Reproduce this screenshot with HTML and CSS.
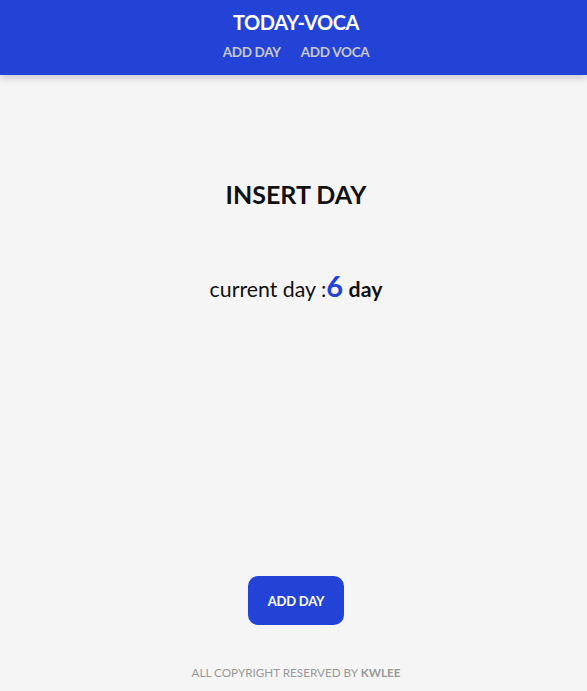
FILE: index.html
```html
<!DOCTYPE html>
<html lang="en">
<head>
<meta charset="utf-8">
<title>TODAY-VOCA</title>
<link rel="stylesheet" href="styles.css">
</head>
<body>
<div class="app">
  <header class="header">
    <h1 class="logo">TODAY-VOCA</h1>
    <nav class="nav">
      <a class="nav-link" href="#">ADD DAY</a>
      <a class="nav-link" href="#">ADD VOCA</a>
    </nav>
  </header>
  <main class="main">
    <h2 class="title">INSERT DAY</h2>
    <p class="current">current day :<span class="num">6</span> <b class="unit">day</b></p>
    <div class="spacer"></div>
    <button class="btn">ADD DAY</button>
  </main>
  <footer class="footer">ALL COPYRIGHT RESERVED BY <b>KWLEE</b></footer>
</div>
</body>
</html>
```
FILE: styles.css
```css
* { box-sizing: border-box; }
html, body { margin: 0; padding: 0; }
body {
  background: #f5f5f5;
  font-family: Lato, "Noto Sans", sans-serif;
  color: #111;
}
.app {
  min-height: 691px;
  display: flex;
  flex-direction: column;
}
.header {
  background: #2343d7;
  height: 75px;
  display: flex;
  flex-direction: column;
  align-items: center;
  padding: 10px 0 0 5px;
  box-shadow: 0 3px 8px rgba(0,0,0,0.18);
}
.logo {
  margin: 0;
  color: #fff;
  font-size: 20px;
  font-weight: 700;
  line-height: 24px;
  letter-spacing: -0.4px;
}
.nav {
  display: flex;
  gap: 20px;
  margin-top: 9px;
}
.nav-link {
  color: #c9c9cc;
  font-size: 13.5px;
  font-weight: 700;
  text-decoration: none;
  line-height: 18px;
  letter-spacing: -0.3px;
}
.main {
  flex: 1;
  display: flex;
  flex-direction: column;
  align-items: center;
  padding: 103px 0 0 5px;
}
.title {
  margin: 0;
  font-size: 25px;
  font-weight: 700;
  line-height: 32px;
}
.current {
  margin: 60px 0 0;
  font-size: 21.3px;
  line-height: 32px;
}
.num {
  color: #2343d7;
  font-size: 29px;
  font-weight: 700;
}
.unit { font-weight: 700; }
.spacer { flex: 1; }
.btn {
  width: 96px;
  height: 49px;
  border: none;
  border-radius: 10px;
  background: #2343d7;
  color: #fff;
  font-family: inherit;
  font-size: 13px;
  font-weight: 700;
  letter-spacing: -0.2px;
  margin-bottom: 39px;
}
.footer {
  text-align: center;
  color: #999;
  font-size: 11.7px;
  line-height: 16px;
  padding: 0 0 11px 5px;
}
.footer b { font-weight: 700; }
```
